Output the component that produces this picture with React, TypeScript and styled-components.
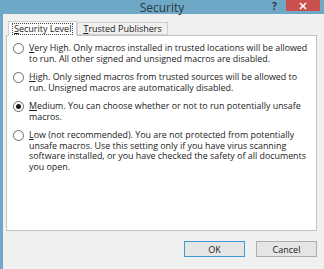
import React from "react";
import styled, { createGlobalStyle } from "styled-components";

const Global = createGlobalStyle`
  html, body { margin: 0; padding: 0; background: #f0f0f0; }
  body { font-family: "Open Sans", "Noto Sans", sans-serif; }
`;

const Window = styled.div`
  width: 324px;
  height: 269px;
  box-sizing: border-box;
  display: flex;
  flex-direction: column;
  background: #6fa7c6;
  padding: 0 0 0 3px;
  overflow: hidden;
`;

const TitleBar = styled.div`
  flex: none;
  height: 14px;
  position: relative;
  margin-left: -3px;
`;

const Title = styled.div`
  position: absolute;
  left: 0;
  right: 0;
  top: 1px;
  text-align: center;
  font-size: 12px;
  line-height: 13px;
  color: #2b3a44;
`;

const Help = styled.div`
  position: absolute;
  left: 272px;
  top: 1px;
  font-size: 10px;
  line-height: 11px;
  font-weight: bold;
  color: #2b3a44;
`;

const Close = styled.div`
  position: absolute;
  left: 286px;
  top: 0;
  width: 34px;
  height: 11px;
  background: #c9504d;
  display: flex;
  align-items: center;
  justify-content: center;
`;

const Body = styled.div`
  flex: 1;
  background: #f0f0f0;
  display: flex;
  flex-direction: column;
  padding: 7px 4px 0 3px;
`;

const Tabs = styled.div`
  flex: none;
  display: flex;
  align-items: flex-end;
  height: 14px;
  padding-left: 2px;
  position: relative;
  z-index: 1;
`;

const Tab = styled.div<{ $active?: boolean }>`
  box-sizing: border-box;
  height: ${(p) => (p.$active ? 15 : 13)}px;
  margin-bottom: ${(p) => (p.$active ? -1 : 0)}px;
  padding: ${(p) => (p.$active ? "2px 4px 0 4px" : "1px 5px 0 5px")};
  background: ${(p) => (p.$active ? "#ffffff" : "#f0f0f0")};
  border: 1px solid #d0d0d0;
  border-bottom: ${(p) => (p.$active ? "none" : "1px solid #d0d0d0")};
  font-size: 9px;
  line-height: 10px;
  color: #1a1a1a;
`;

const Focus = styled.span`
  display: inline-block;
  outline: 1px dotted #444;
  padding: 0 1px;
`;

const Panel = styled.div`
  flex: none;
  width: 311px;
  height: 196px;
  box-sizing: border-box;
  background: #ffffff;
  border: 1px solid #c4c4c4;
  padding: 7px 6px 0 6px;
  display: flex;
  flex-direction: column;
  gap: 8px;
`;

const Option = styled.label`
  display: flex;
  align-items: flex-start;
  gap: 5px;
`;

const Radio = styled.span<{ $checked?: boolean }>`
  flex: none;
  width: 11px;
  height: 11px;
  box-sizing: border-box;
  border-radius: 50%;
  border: 1px solid #6b6b6b;
  background: #fff;
  display: flex;
  align-items: center;
  justify-content: center;
  &::after {
    content: "";
    display: ${(p) => (p.$checked ? "block" : "none")};
    width: 5px;
    height: 5px;
    border-radius: 50%;
    background: #1a1a1a;
  }
`;

const Text = styled.div`
  font-size: 8.9px;
  line-height: 10.5px;
  color: #222;
  width: 280px;
`;

const Footer = styled.div`
  flex: none;
  display: flex;
  justify-content: flex-end;
  gap: 11px;
  padding: 10px 3px 0 0;
`;

const Button = styled.div<{ $default?: boolean }>`
  width: 61px;
  height: 16px;
  box-sizing: border-box;
  border: 1px solid ${(p) => (p.$default ? "#3c9ad8" : "#adadad")};
  background: #e5e5e5;
  font-size: 9px;
  display: flex;
  align-items: center;
  justify-content: center;
  color: #1a1a1a;
`;

const options = [
  { key: "V", rest: "ery High. Only macros installed in trusted locations will be allowed to run. All other signed and unsigned macros are disabled." },
  { key: "H", rest: "igh. Only signed macros from trusted sources will be allowed to run. Unsigned macros are automatically disabled." },
  { key: "M", rest: "edium. You can choose whether or not to run potentially unsafe macros.", checked: true },
  { key: "L", rest: "ow (not recommended). You are not protected from potentially unsafe macros. Use this setting only if you have virus scanning software installed, or you have checked the safety of all documents you open." },
];

export default function App() {
  return (
    <>
      <Global />
      <Window>
        <TitleBar>
          <Title>Security</Title>
          <Help>?</Help>
          <Close>
            <svg width="8" height="8" viewBox="0 0 8 8">
              <path d="M1 1L7 7M7 1L1 7" stroke="#fff" strokeWidth="1.6" />
            </svg>
          </Close>
        </TitleBar>
        <Body>
          <Tabs>
            <Tab $active>
              <Focus><u>S</u>ecurity Level</Focus>
            </Tab>
            <Tab>
              <u>T</u>rusted Publishers
            </Tab>
          </Tabs>
          <Panel>
            {options.map((o) => (
              <Option key={o.key}>
                <Radio $checked={o.checked} />
                <Text>
                  <u>{o.key}</u>
                  {o.rest}
                </Text>
              </Option>
            ))}
          </Panel>
          <Footer>
            <Button $default>OK</Button>
            <Button>Cancel</Button>
          </Footer>
        </Body>
      </Window>
    </>
  );
}
